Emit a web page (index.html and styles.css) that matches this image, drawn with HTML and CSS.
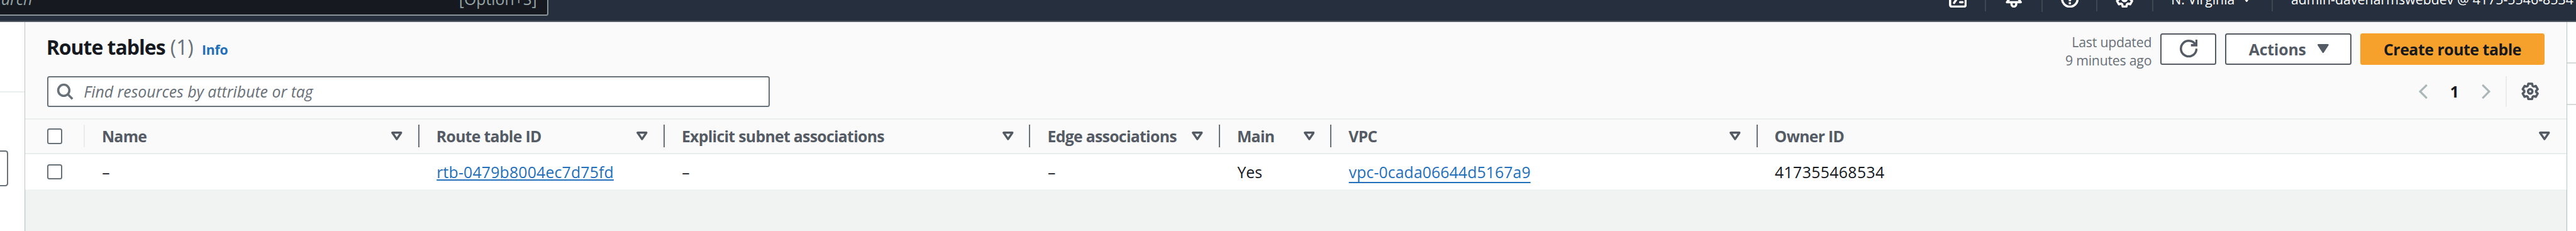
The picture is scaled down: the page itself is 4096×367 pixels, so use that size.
FILE: index.html
```
<!DOCTYPE html>
<html lang="en">
<head>
<meta charset="utf-8">
<title>Route tables</title>
<link rel="stylesheet" href="styles.css">
</head>
<body>
<svg class="defs" aria-hidden="true">
  <symbol id="tri" viewBox="0 0 20 16"><path d="M2 2h16L10 13.6z" fill="none" stroke="currentColor" stroke-width="3.8" stroke-linejoin="round"/></symbol>
  <symbol id="gear" viewBox="0 0 16 16"><path d="M6.31 1.1H9.69L10.16 3.1L11.12 3.71L13.04 3.14L14.73 6.07L13.27 7.45V8.55L14.73 9.93L13.04 12.86L11.12 12.29L10.16 12.9L9.69 14.9H6.31L5.84 12.9L4.88 12.29L2.96 12.86L1.27 9.93L2.73 8.55V7.45L1.27 6.07L2.96 3.14L4.88 3.71L5.84 3.1Z" fill="none" stroke="currentColor" stroke-width="2" stroke-linejoin="round"/><circle cx="8" cy="8" r="2" fill="none" stroke="currentColor" stroke-width="2"/></symbol>
</svg>
<header class="topbar">
  <div class="topbar-search"><span class="ph">Search</span><span>[Option+S]</span></div>
  <nav class="utilities">
    <div class="util"><svg class="icon" viewBox="0 0 16 16"><rect x="1" y="1" width="14" height="14" rx="1.6"/><path d="M4 4l3.6 3.2L4.6 11.6M10 11h2.2" stroke-linecap="round"/></svg></div>
    <div class="util bell"><svg class="icon" viewBox="0 0 16 16"><path d="M8 1C5 1 4 3 4 5v3L1.8 11h12.4L12 8V5c0-2-1-4-4-4z" stroke-linejoin="round"/><path d="M5.9 11v1.8a2.1 2.1 0 0 0 4.2 0V11"/></svg></div>
    <div class="util help"><svg class="icon" viewBox="0 0 16 16"><circle cx="8" cy="8" r="7"/><path d="M5.8 6.2a2.2 2.2 0 1 1 2.2 2.3v1.6M8 11v1.9"/></svg></div>
    <div class="util"><svg class="icon"><use href="#gear"/></svg></div>
    <div class="util region"><span>N. Virginia</span><svg class="caret" viewBox="0 0 10 8"><path d="M1 1h8L5 7z"/></svg></div>
    <div class="util account">admin-daveharmswebdev @ 4175-5546-8534</div>
  </nav>
</header>
<div class="shell">
  <aside class="side"><div class="side-head"></div><div class="side-box"></div></aside>
  <main class="main">
    <section class="head">
      <div class="title-row">
        <h1>Route tables <span class="count">(1)</span><a class="info">Info</a></h1>
        <div class="actions">
          <p class="updated">Last updated<br>9 minutes ago</p>
          <button class="btn refresh"><svg class="icon" viewBox="0 0 16 16"><path d="M15 8c0 3.87-3.13 7-7 7s-7-3.13-7-7 3.13-7 7-7c2.8 0 5.2 1.6 6.3 4M15 0v5h-5"/></svg></button>
          <button class="btn menu">Actions<svg class="tri" viewBox="0 0 20 16"><path d="M1.5 1.5h17L10 14.5z" fill="currentColor" stroke="currentColor" stroke-width="3" stroke-linejoin="round"/></svg></button>
          <button class="btn primary">Create route table</button>
        </div>
      </div>
      <div class="filter-row">
        <div class="filter"><svg class="icon" viewBox="0 0 16 16"><circle cx="7" cy="7" r="5"/><path d="M10.4 10.4l4.4 4.4"/></svg><span>Find resources by attribute or tag</span></div>
        <div class="pager">
          <svg class="chev" viewBox="0 0 16 28"><path d="M14.5 2L2.5 14l12 12"/></svg>
          <b>1</b>
          <svg class="chev" viewBox="0 0 16 28"><path d="M1.5 2l12 12-12 12"/></svg>
          <span class="prefs"><svg class="icon"><use href="#gear"/></svg></span>
        </div>
      </div>
    </section>
    <div class="grid thead">
      <div class="th check"><i class="box"></i></div>
      <div class="th">Name<svg class="tri"><use href="#tri"/></svg></div>
      <div class="th">Route table ID<svg class="tri"><use href="#tri"/></svg></div>
      <div class="th">Explicit subnet associations<svg class="tri"><use href="#tri"/></svg></div>
      <div class="th">Edge associations<svg class="tri"><use href="#tri"/></svg></div>
      <div class="th">Main<svg class="tri"><use href="#tri"/></svg></div>
      <div class="th">VPC<svg class="tri"><use href="#tri"/></svg></div>
      <div class="th last">Owner ID<svg class="tri"><use href="#tri"/></svg></div>
    </div>
    <div class="grid row">
      <div class="check"><i class="box"></i></div>
      <div class="td">–</div>
      <div class="td"><a class="link">rtb-0479b8004ec7d75fd</a></div>
      <div class="td">–</div>
      <div class="td">–</div>
      <div class="td">Yes</div>
      <div class="td"><a class="link low">vpc-0cada06644d5167a9</a></div>
      <div class="td num">417355468534</div>
    </div>
  </main>
  <aside class="tools"><div class="tool-a"></div><div class="tool-b"></div></aside>
</div>
</body>
</html>
```

FILE: styles.css
```
* { box-sizing: border-box; }
html { font-size: 8.8658px; }
body {
  margin: 0;
  height: 100vh;
  overflow: hidden;
  display: flex;
  flex-direction: column;
  font-family: "Open Sans", "Noto Sans", sans-serif;
  font-size: 2.8rem;
  color: #16191f;
  background: #f1f3f2;
}
h1, p { margin: 0; }
.defs { display: none; }
.icon { width: 3.2rem; height: 3.2rem; flex: none; fill: none; stroke: currentColor; stroke-width: 2; }
.tri { width: 2rem; height: 1.6rem; flex: none; }

.topbar {
  flex: none;
  display: flex;
  align-items: center;
  justify-content: space-between;
  height: 8.2rem;
  margin-top: -4.2rem;
  border-bottom: 2px solid #545b64;
  background: #262f3e;
  color: #fff;
}
.topbar-search {
  display: flex;
  align-items: center;
  justify-content: space-between;
  width: 104.3rem;
  height: 6rem;
  margin-left: -6rem;
  padding: 0 1.8rem 0 3.2rem;
  border: 2px solid #879596;
  border-radius: .4rem;
  background: #16191f;
  color: #95a5a6;
}
.topbar-search .ph { font-style: italic; }
.utilities { display: flex; align-items: center; font-size: 2.4rem; font-weight: 500; }
.util {
  display: flex;
  align-items: center;
  justify-content: center;
  width: 10rem;
  height: 4.4rem;
  border-right: 2px solid #414750;
}
.util.bell { width: 10.2rem; height: 4.8rem; }
.util.help { width: 9.8rem; }
.util.region { width: 21.4rem; justify-content: space-between; padding: 0 3.9rem 0 3.2rem; white-space: nowrap; }
.util.account { width: 54.4rem; justify-content: flex-start; padding-left: 3.3rem; border: 0; white-space: nowrap; letter-spacing: .005rem; }
.caret { width: 1.2rem; height: 1rem; margin-top: .2rem; fill: #fff; stroke: #fff; stroke-width: 1.5; stroke-linejoin: round; }

.shell { flex: 1; display: flex; }
.side { width: 4.4rem; background: #fff; }
.side-head { height: 12.6rem; border-bottom: 2px solid #eaeded; }
.side-box { width: 1.5rem; height: 6.4rem; margin-top: 10.4rem; border: 2px solid #687078; border-left: 0; border-radius: 0 .5rem .5rem 0; }
.main { width: 456rem; box-shadow: inset 1px 0 #bcc5c6, inset 2px 0 #e6e9e9, inset -1px 0 #bcc5c6, inset -2px 0 #e6e9e9; }
.tools { width: 1.6rem; background: #fff; }
.tool-a { height: 7.4rem; border-bottom: 2px solid #d5dbdb; }
.tool-b { height: 7.4rem; border-bottom: 2px solid #d5dbdb; }

.head, .thead, .row { margin: 0 1px; }
.head { height: 17.4rem; padding: 2rem 3.9rem 0 3.9rem; background: #fafafa; border-bottom: 2px solid #eaeded; }
.title-row, .filter-row { display: flex; justify-content: space-between; height: 5.6rem; }
.filter-row { margin-top: 2rem; }
h1 { margin-left: -.1rem; font-size: 3.6rem; font-weight: 700; line-height: 5rem; letter-spacing: -.11rem; white-space: nowrap; }
.count { margin-left: .1rem; font-weight: 400; letter-spacing: 0; color: #687078; }
.info { margin-left: 1.5rem; font-size: 2.4rem; letter-spacing: -.03rem; color: #2270bb; }
.actions { display: flex; gap: 1.6rem; }
.updated { font-size: 2.4rem; line-height: 3.2rem; text-align: right; color: #687078; letter-spacing: -.025rem; white-space: nowrap; }
.btn {
  display: flex;
  align-items: center;
  justify-content: center;
  height: 5.6rem;
  padding: 0 0 .1rem;
  border: 2px solid #545b64;
  border-radius: .4rem;
  background: #fff;
  color: #545b64;
  font: 700 2.8rem "Open Sans", "Noto Sans", sans-serif;
  white-space: nowrap;
}
.refresh { width: 10rem; }
.menu { width: 22.6rem; justify-content: space-between; padding: 0 3.8rem .1rem 4rem; letter-spacing: -.02rem; }
.primary { width: 33.1rem; border-color: #f6a12c; background: #f6a12c; color: #16191f; letter-spacing: -.05rem; }
.filter {
  display: flex;
  align-items: center;
  gap: 1.8rem;
  width: 129.6rem;
  padding-left: 1.4rem;
  border: 2px solid #687078;
  border-radius: .4rem;
  background: #fff;
  color: #687078;
  font-style: italic;
}
.pager { display: flex; align-items: center; }
.pager b { width: 9.7rem; text-align: center; }
.chev { width: 1.6rem; height: 2.8rem; fill: none; stroke: #aab7b8; stroke-width: 3.6; }
.prefs { display: flex; align-items: center; height: 5.6rem; margin-left: 2.7rem; padding: 0 1rem 0 2.6rem; border-left: 2px solid #eaeded; color: #545b64; }

.grid { display: grid; grid-template-columns: 10.7rem 60rem 44rem 65.6rem 34rem 20rem 76.4rem 1fr; align-items: center; }
.thead { height: 6.2rem; background: #fafafa; border-bottom: 2px solid #eaeded; font-weight: 700; color: #545b64; }
.th { display: flex; align-items: center; justify-content: space-between; height: 4rem; padding: 0 2.8rem 0 3.05rem; border-right: 2px solid #687078; letter-spacing: -.08rem; white-space: nowrap; }
.th.last { border: 0; padding-right: 2.9rem; }
.check, .th.check { display: flex; justify-content: flex-start; padding: 0 0 0 3.9rem; }
.th.check { border-right-color: #eaeded; }
.box { width: 2.8rem; height: 2.8rem; border: 2px solid #687078; border-radius: .4rem; background: #fff; }
.row { height: 6.4rem; background: #fff; }
.td { padding: 0 0 .1rem 3.1rem; white-space: nowrap; }
.link { color: #2270bb; letter-spacing: .02rem; text-decoration: underline; text-decoration-thickness: 2px; text-underline-offset: .25rem; text-decoration-skip-ink: none; }
.low { text-underline-offset: .7rem; letter-spacing: .01rem; }
.num { letter-spacing: .04rem; }
```
